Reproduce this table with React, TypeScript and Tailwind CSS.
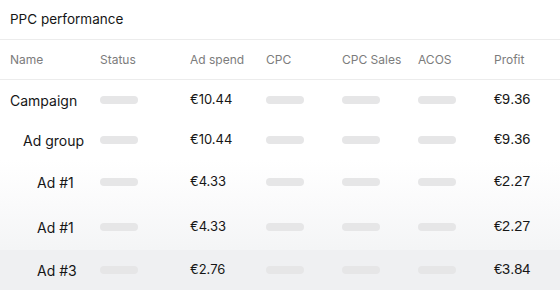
const rows = [
  { name: "Campaign", indent: "pl-0", spend: "€10.44", profit: "€9.36", h: "h-[40px]", bg: "bg-white" },
  { name: "Ad group", indent: "pl-[13px]", spend: "€10.44", profit: "€9.36", h: "h-[40px]", bg: "bg-white" },
  { name: "Ad #1", indent: "pl-[27px]", spend: "€4.33", profit: "€2.27", h: "h-[44px]", bg: "bg-gradient-to-b from-white to-[#fafafb]" },
  { name: "Ad #1", indent: "pl-[27px]", spend: "€4.33", profit: "€2.27", h: "h-[46px]", bg: "bg-gradient-to-b from-[#fafafb] to-[#f4f5f6]" },
  { name: "Ad #3", indent: "pl-[27px]", spend: "€2.76", profit: "€3.84", h: "h-[40px]", bg: "bg-[#eff0f2]" },
];

const cols = "grid grid-cols-[90px_90px_76px_76px_76px_76px_1fr] items-center pl-[10px]";

const Pill = () => <div className="h-2 w-[38px] rounded-full bg-[#e6e6e7]" />;

export default function App() {
  return (
    <div className="w-[560px] h-[290px] overflow-hidden bg-white text-[#161616] font-['Inter',sans-serif]">
      <div className="h-[40px] flex items-center pl-[10px] border-b border-[#ececec] text-[13.5px]">
        PPC performance
      </div>
      <div className={`${cols} h-[40px] border-b border-[#ececec] text-[12px] text-[#7c7c7c]`}>
        <span>Name</span>
        <span>Status</span>
        <span>Ad spend</span>
        <span>CPC</span>
        <span>CPC Sales</span>
        <span>ACOS</span>
        <span>Profit</span>
      </div>
      {rows.map((r, i) => (
        <div key={i} className={`${cols} ${r.h} ${r.bg} text-[13px]`}>
          <span className={`${r.indent} text-[14px]`}>{r.name}</span>
          <Pill />
          <span>{r.spend}</span>
          <Pill />
          <Pill />
          <Pill />
          <span className="font-['Liberation_Sans',sans-serif] text-[14.5px]">{r.profit}</span>
        </div>
      ))}
    </div>
  );
}
